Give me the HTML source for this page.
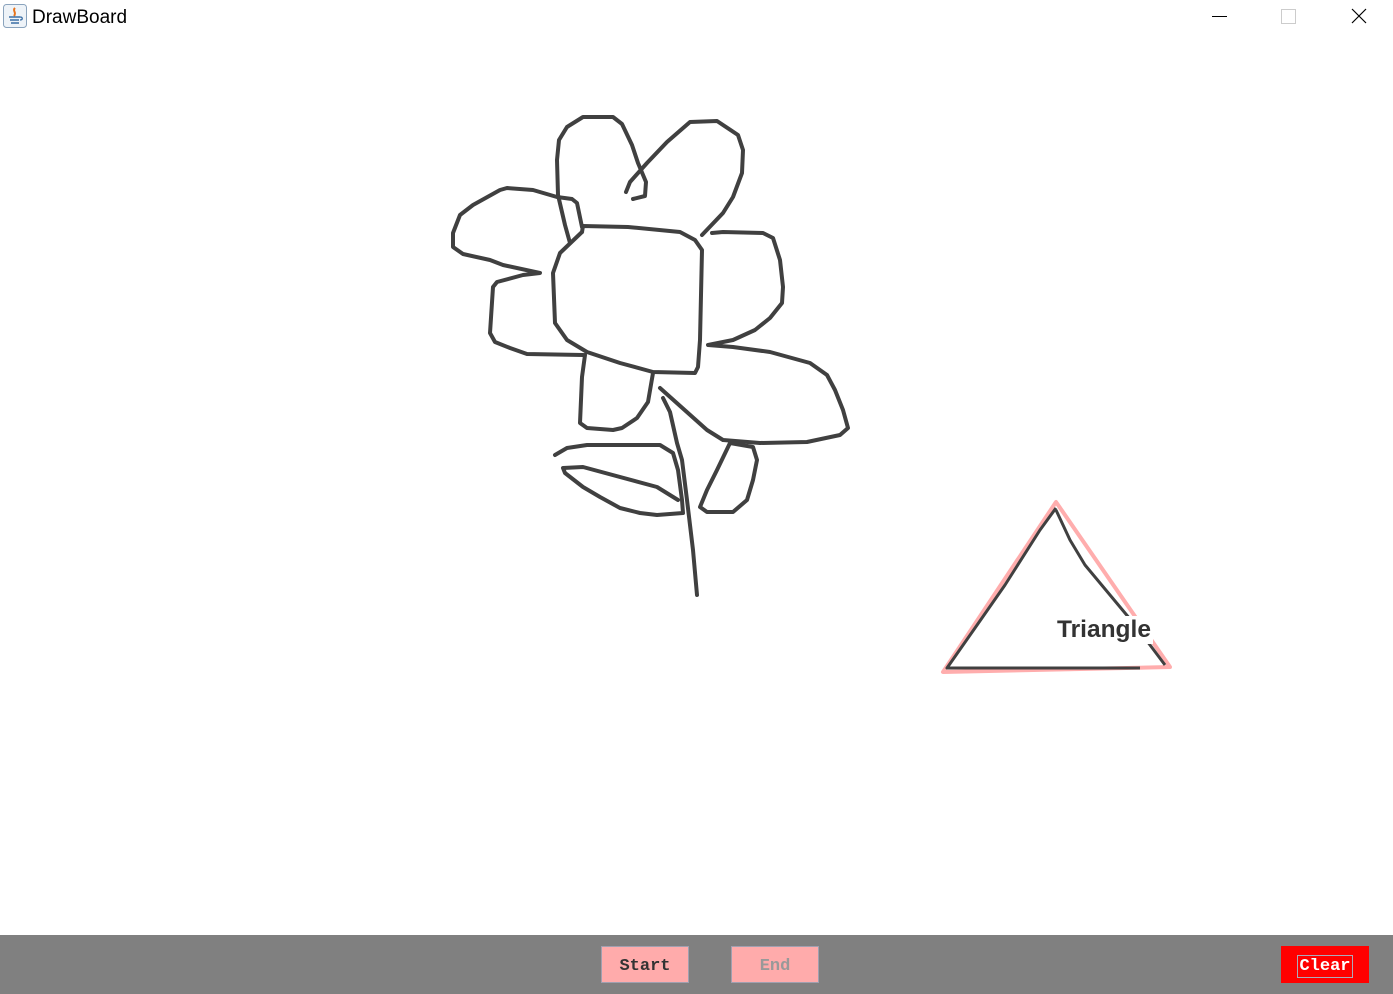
<!DOCTYPE html>
<html><head><meta charset="utf-8"><style>
html,body{margin:0;padding:0;width:1393px;height:994px;overflow:hidden;background:#fff;font-family:"Liberation Sans",sans-serif;position:relative}
.t{position:absolute;left:32px;top:7px;font-size:19px;color:#000}
.bar{position:absolute;left:0;top:935px;width:1393px;height:59px;background:#808080}
.btn{position:absolute;top:946px;height:37px;box-sizing:border-box;font-family:"Liberation Mono",monospace;font-weight:bold;font-size:17px;display:flex;align-items:center;justify-content:center;padding-top:3px}
.lab{position:absolute;left:1057px;top:616px;font-size:24.5px;font-weight:bold;color:#333;background:#fff;padding:0 2px 0 0;line-height:28px}
</style></head><body>
<svg style="position:absolute;left:3px;top:4px" width="24" height="24" viewBox="0 0 24 24"><rect x="0.5" y="0.5" width="23" height="23" rx="3" fill="#eef3f8" stroke="#8aa3bd"/><path d="M12 4c-3 3 2 4-1 8" stroke="#e8731a" stroke-width="2" fill="none"/><path d="M6 13h11M7 16h9M8 19h8" stroke="#3a6ea5" stroke-width="1.6"/><path d="M17 13c3 0 3 3 0 3" stroke="#3a6ea5" stroke-width="1.3" fill="none"/></svg>
<div class="t">DrawBoard</div>
<svg style="position:absolute;left:1200px;top:0" width="193" height="34">
<line x1="12" y1="16.5" x2="27" y2="16.5" stroke="#000" stroke-width="1"/>
<rect x="81.5" y="9.5" width="14" height="14" fill="none" stroke="#ccc"/>
<path d="M152 9L166 23M166 9L152 23" stroke="#000" stroke-width="1.2"/>
</svg>
<svg style="position:absolute;left:0;top:0" width="1393" height="935">
<g fill="none" stroke="#404040" stroke-width="4" stroke-linecap="round" stroke-linejoin="round">
<path d="M582,232 L583,226 L628,227 L680,232 L695,240 L702,250 L700,340 L698,367 L695,373 L653,372 L620,363 L587,352 L567,340 L555,323 L553,273 L560,253 L582,232"/>
<path d="M570,243 L565,225 L558,195 L557,160 L559,140 L567,127 L583,117 L613,117 L622,124 L632,145 L638,163 L646,182 L645,196 L633,199"/>
<path d="M626,192 L630,182 L647,163 L667,142 L690,122 L717,121 L738,135 L743,150 L742,173 L733,197 L723,213 L702,235"/>
<path d="M582,227 L577,203 L572,199 L557,197 L533,190 L507,188 L500,190 L473,205 L460,215 L453,233 L453,247 L463,254 L490,260 L503,265 L540,273 L523,275 L497,282 L493,287 L490,333 L495,342 L510,348 L527,354 L583,355"/>
<path d="M585,355 L582,377 L580,423 L587,428 L613,430 L622,428 L637,418 L648,402 L653,373"/>
<path d="M712,233 L723,232 L763,233 L773,238 L780,260 L783,287 L782,303 L770,318 L755,330 L733,340 L708,345 L733,347 L770,352 L810,363 L827,375 L835,390 L843,410 L848,428 L840,435 L807,442 L760,443 L723,440 L707,430 L660,388"/>
<path d="M663,398 L670,412 L677,443 L682,460 L687,500 L693,550 L697,595"/>
<path d="M555,455 L567,448 L587,445 L660,445 L673,453 L678,470 L682,500 L683,513 L657,515 L640,513 L620,508 L600,497 L583,487 L565,473 L563,468 L583,467 L657,487 L678,500"/>
<path d="M730,443 L717,470 L707,490 L700,507 L707,512 L733,512 L747,500 L753,480 L757,460 L753,447 L730,443"/>
</g>
<path d="M1056,502 L943,672 L1170,667 Z" fill="none" stroke="#ffadad" stroke-width="4" stroke-linejoin="round"/>
<path d="M1056,508 L1040,530 L1005,585 L975,628 L947,668 L1140,668 M1056,510 L1070,540 L1085,565 L1110,595 L1135,625 L1165,665" fill="none" stroke="#404040" stroke-width="3" stroke-linejoin="round"/>
</svg>
<div class="lab">Triangle</div>
<div class="bar"></div>
<div class="btn" style="left:601px;width:88px;background:#ffabab;border:1px solid #a0a0b0;color:#333">Start</div>
<div class="btn" style="left:731px;width:88px;background:#ffabab;border:1px solid #a0a0b0;color:#999">End</div>
<div class="btn" style="left:1281px;width:88px;background:#ff0000;color:#fff"><span style="border:1px solid #aab;padding:0 1px;line-height:21px">Clear</span></div>
</body></html>
